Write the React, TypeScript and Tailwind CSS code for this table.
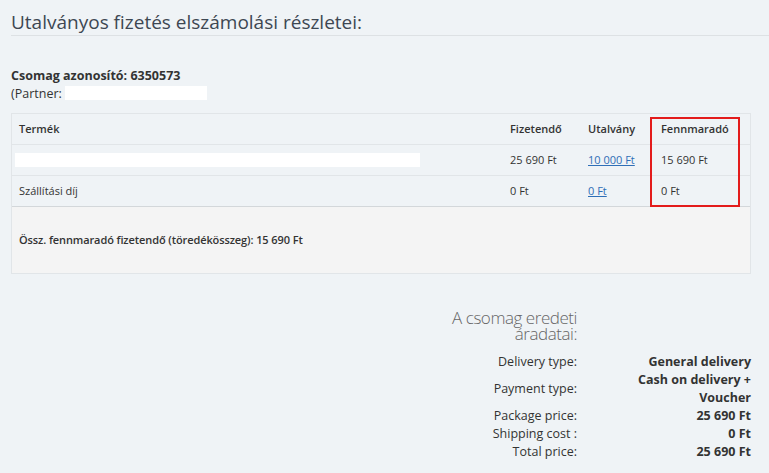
import React from 'react';

const rows = [
  { name: '', pay: '25 690 Ft', voucher: '10 000 Ft', rest: '15 690 Ft', blank: true },
  { name: 'Szállítási díj', pay: '0 Ft', voucher: '0 Ft', rest: '0 Ft', blank: false },
];

const summary: { label: string; value: React.ReactNode }[] = [
  { label: 'Delivery type:', value: 'General delivery' },
  {
    label: 'Payment type:',
    value: (
      <>
        Cash on delivery +<br />
        Voucher
      </>
    ),
  },
  { label: 'Package price:', value: '25 690 Ft' },
  { label: 'Shipping cost :', value: '0 Ft' },
  { label: 'Total price:', value: '25 690 Ft' },
];

const App: React.FC = () => {
  return (
    <div className="min-h-[473px] bg-[#eff3f6] font-['Open_Sans',sans-serif] text-[#333]">
      <div className="pl-[11px] pt-[9px]">
        <h1 className="text-[19px] leading-[26px] font-normal text-[#3d4752] border-b border-[#dde1e4]">
          Utalványos fizetés elszámolási részletei:
        </h1>

        <div className="mt-[31px] text-[12.5px] leading-[18px]">
          <p className="font-bold">Csomag azonosító: 6350573</p>
          <p>
            (Partner: <span className="inline-block w-[142px] h-[14px] bg-white align-[-2px]" />
          </p>
        </div>

        {/* settlement table */}
        <div className="relative mt-[10px] w-[740px] border border-[#e1e5e8] text-[11px]">
          <div className="grid grid-cols-[490px_78px_73px_1fr] h-[31px] items-center border-b border-[#e1e5e8] font-semibold">
            <div className="pl-[7px]">Termék</div>
            <div className="pl-[8px]">Fizetendő</div>
            <div className="pl-[8px]">Utalvány</div>
            <div className="pl-[8px]">Fennmaradó</div>
          </div>
          {rows.map((r, i) => (
            <div
              key={i}
              className={`grid grid-cols-[490px_78px_73px_1fr] h-[31px] items-center border-b ${
                i === rows.length - 1 ? 'border-[#d3d7da]' : 'border-[#e1e5e8]'
              }`}
            >
              <div className="pl-[7px]">
                {r.blank ? <span className="block w-[405px] h-[14px] bg-white -ml-[4px]" /> : r.name}
              </div>
              <div className="pl-[8px]">{r.pay}</div>
              <div className="pl-[8px]">
                <a href="#" className="text-[#2f6fb7] underline">
                  {r.voucher}
                </a>
              </div>
              <div className="pl-[8px]">{r.rest}</div>
            </div>
          ))}
          <div className="h-[66px] bg-[#f4f4f4] flex items-center pl-[7px] font-semibold tracking-[-0.1px]">
            Össz. fennmaradó fizetendő (töredékösszeg): 15 690 Ft
          </div>
          <div className="absolute left-[638px] top-[3px] w-[90px] h-[90px] border-2 border-[#e31b1b]" />
        </div>

        {/* original prices */}
        <div className="mt-[36px] w-[740px] flex flex-col items-end">
          <div className="grid grid-cols-[130px_120px] gap-x-[54px] text-[12.5px] leading-[18px]">
            <h2 className="text-[17px] leading-[16px] font-light tracking-[-0.45px] text-[#666] text-right mb-[11px]">
              A csomag eredeti áradatai:
            </h2>
            <div />
            {summary.map((s) => (
              <React.Fragment key={s.label}>
                <div className="text-right self-center">{s.label}</div>
                <div className="text-right font-bold">{s.value}</div>
              </React.Fragment>
            ))}
          </div>
        </div>
      </div>
    </div>
  );
};

export default App;
